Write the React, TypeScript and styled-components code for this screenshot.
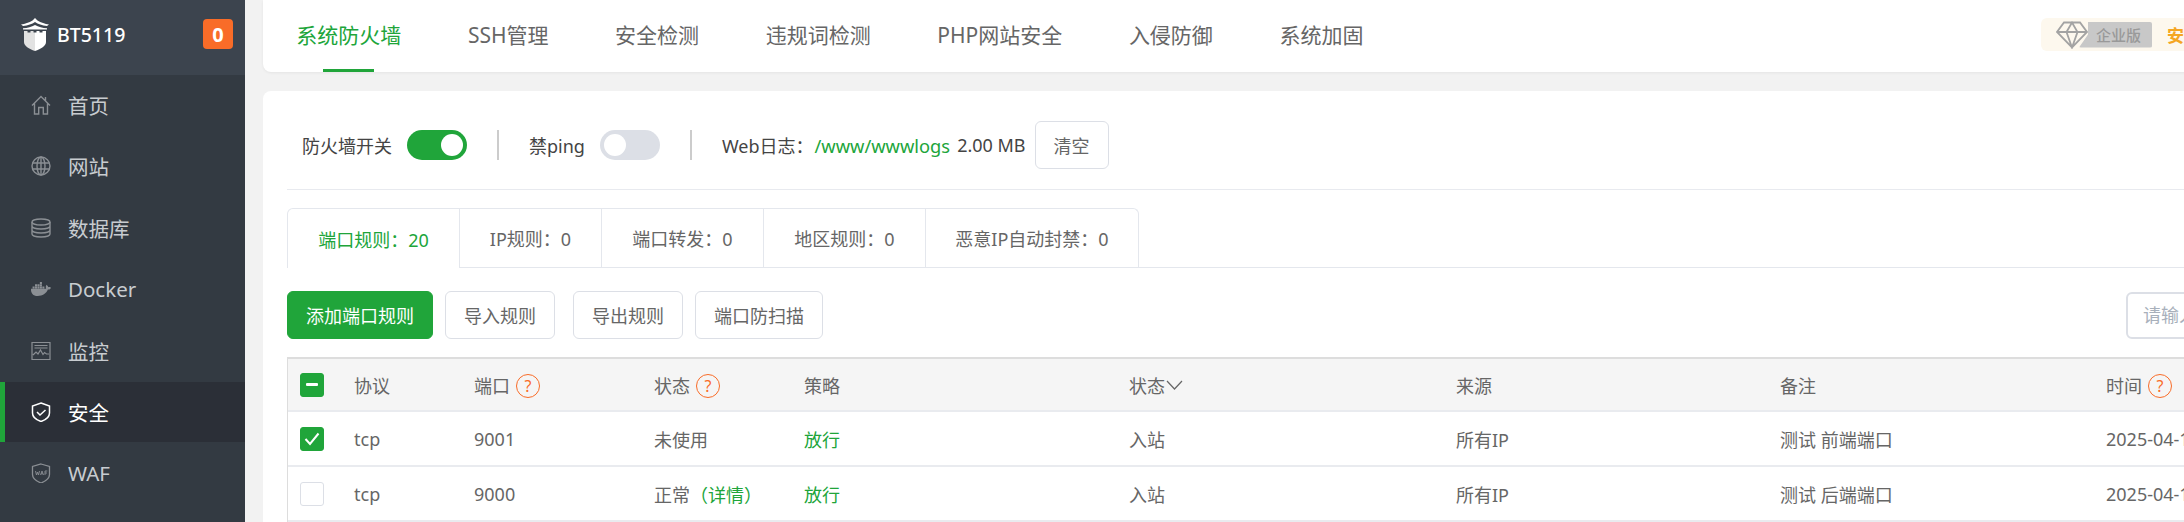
import React from 'react';
import styled, { createGlobalStyle } from 'styled-components';
import { FaDocker } from 'react-icons/fa';

const GREEN = '#20a53a';
const ORANGE = '#f96c28';

const GlobalStyle = createGlobalStyle`
  html, body { margin: 0; padding: 0; height: 100%; overflow: hidden; background: #f2f2f2; }
  body { font-family: "Noto Sans", "Noto Sans CJK SC", sans-serif; }
  * { box-sizing: border-box; }
`;

const Shell = styled.div`
  display: flex;
  width: 2184px;
  height: 522px;
  overflow: hidden;
`;

const Sidebar = styled.aside`
  flex: 0 0 245px;
  background: #333a42;
`;

const Brand = styled.div`
  display: flex;
  align-items: center;
  height: 75px;
  padding: 0 12px 7px 20px;
  background: #3c444e;
  color: #fff;
`;

const BrandName = styled.span`
  flex: 1;
  margin-left: 7px;
  font-size: 19.5px;
  font-weight: 500;
`;

const Badge = styled.span`
  display: flex;
  align-items: center;
  justify-content: center;
  width: 30px;
  height: 30px;
  border-radius: 4px;
  background: ${ORANGE};
  font-size: 20px;
  font-weight: 700;
`;

const MenuItem = styled.div<{ $active?: boolean }>`
  display: flex;
  align-items: center;
  gap: 17px;
  height: 60px;
  margin-bottom: 1.4px;
  padding-left: ${p => (p.$active ? 26 : 31)}px;
  border-left: ${p => (p.$active ? `5px solid ${GREEN}` : 'none')};
  background: ${p => (p.$active ? '#2b2f37' : 'transparent')};
  color: ${p => (p.$active ? '#fff' : '#c8ccd0')};
  font-size: 20.5px;

  svg {
    flex: 0 0 20px;
    width: 20px;
    height: 20px;
    color: ${p => (p.$active ? '#fff' : '#8b8f94')};
  }
`;

const Main = styled.main`
  flex: 1;
  min-width: 0;
  padding-left: 18px;
`;

const TopBar = styled.nav`
  display: flex;
  align-items: center;
  width: 1960px;
  height: 72px;
  background: #fff;
  border-radius: 0 0 8px 8px;
  box-shadow: 0 1px 3px rgba(0, 0, 0, 0.06);
`;

const TopTab = styled.div<{ $active?: boolean }>`
  position: relative;
  display: flex;
  align-items: center;
  height: 72px;
  padding: 0 33.3px 4px;
  color: ${p => (p.$active ? GREEN : '#666')};
  font-size: 21px;

  ${p =>
    p.$active &&
    `&::after {
      content: '';
      position: absolute;
      left: 60px;
      bottom: 0;
      width: 51px;
      height: 3px;
      background: ${GREEN};
    }`}
`;

const Enterprise = styled.div`
  display: flex;
  align-items: center;
  flex: 0 0 143px;
  height: 33px;
  margin: 0 39px 3px auto;
  padding-left: 15px;
  border-radius: 6px 0 0 6px;
  background: #fdf8ee;
  overflow: hidden;
`;

const EnterpriseTag = styled.div`
  position: relative;
  display: flex;
  align-items: center;
  flex: 0 0 96px;
  height: 26px;

  svg {
    position: absolute;
    left: 0;
    top: -1px;
    z-index: 1;
  }

  span {
    display: block;
    width: 73px;
    height: 26px;
    margin-left: 23px;
    padding-left: 17px;
    border-radius: 2px;
    background: #c8c8c8;
    color: #999;
    font-size: 15px;
    font-weight: 500;
    line-height: 26px;
    white-space: nowrap;
    clip-path: polygon(9px 0, 100% 0, 100% 100%, 0 100%, 9px 50%);
  }
`;

const EnterpriseLink = styled.span`
  margin-left: 15px;
  color: #f5a623;
  font-size: 17px;
  font-weight: 700;
  white-space: nowrap;
`;

const Card = styled.section`
  width: 1960px;
  height: 460px;
  margin-top: 19px;
  padding: 30px 24px 0;
  background: #fff;
  border-radius: 8px 8px 0 0;
`;

const SwitchRow = styled.div`
  display: flex;
  align-items: center;
  height: 48px;
  color: #444;
  font-size: 18px;
  white-space: nowrap;
`;

const Label = styled.span<{ $ml?: number }>`
  margin-left: ${p => p.$ml ?? 0}px;
`;

const Toggle = styled.span<{ $on?: boolean }>`
  position: relative;
  display: inline-block;
  width: 60px;
  height: 30px;
  margin-left: 15px;
  border-radius: 15px;
  background: ${p => (p.$on ? GREEN : '#dcdfe6')};

  &::after {
    content: '';
    position: absolute;
    top: 4px;
    left: ${p => (p.$on ? 34 : 4)}px;
    width: 22px;
    height: 22px;
    border-radius: 50%;
    background: #fff;
  }
`;

const Sep = styled.span`
  width: 2px;
  height: 30px;
  margin: 0 30px;
  background: #ccc;
`;

const GreenText = styled.span`
  color: ${GREEN};
`;

const LogPath = styled(GreenText)`
  margin-left: 1px;
  font-size: 18.3px;
`;

const Btn = styled.button<{ $primary?: boolean; $ml?: number; $w: number }>`
  width: ${p => p.$w}px;
  height: 48px;
  margin-left: ${p => p.$ml ?? 0}px;
  padding: 0;
  border: 1px solid ${p => (p.$primary ? GREEN : '#dcdfe6')};
  border-radius: 6px;
  background: ${p => (p.$primary ? GREEN : '#fff')};
  color: ${p => (p.$primary ? '#fff' : '#666')};
  font-family: inherit;
  font-size: 18px;
`;

const Divider = styled.div`
  height: 1px;
  margin-top: 20px;
  background: #e8eaef;
`;

const Tabs = styled.div`
  display: flex;
  height: 60px;
  margin-top: 18px;
  border-bottom: 1px solid #e4e7ed;
`;

const Tab = styled.div<{ $w: number; $active?: boolean }>`
  display: flex;
  align-items: center;
  justify-content: center;
  width: ${p => p.$w}px;
  height: ${p => (p.$active ? 60 : 59)}px;
  border: 1px solid #e4e7ed;
  border-left: ${p => (p.$active ? '1px solid #e4e7ed' : 'none')};
  border-bottom: none;
  border-radius: ${p => (p.$active ? '6px 0 0 0' : '0')};
  background: #fff;
  color: ${p => (p.$active ? GREEN : '#666')};
  font-size: 18px;

  &:last-child {
    border-top-right-radius: 6px;
  }
`;

const Actions = styled.div`
  display: flex;
  align-items: center;
  margin-top: 23px;
`;

const SearchBox = styled.div`
  width: 120px;
  height: 47px;
  margin-left: auto;
  margin-right: -47px;
  padding-left: 15px;
  border: 2px solid #dcdfe6;
  border-radius: 6px;
  color: #a8b0bb;
  font-size: 18px;
  line-height: 43px;
  white-space: nowrap;
  overflow: hidden;
`;

const Table = styled.div`
  width: 1960px;
  margin-top: 18px;
  border-top: 2px solid #ddd;
  border-left: 1px solid #ddd;
`;

const Row = styled.div<{ $head?: boolean }>`
  display: grid;
  grid-template-columns: 66px 120px 180px 150px 325px 327px 324px 326px 300px;
  align-items: center;
  height: ${p => (p.$head ? 53 : 55)}px;
  border-bottom: 2px solid #e9ebef;
  background: ${p => (p.$head ? '#f5f5f5' : '#fff')};
  color: #666;
  font-size: 18px;
  white-space: nowrap;
`;

const SortHead = styled.div`
  display: flex;
  align-items: center;
  gap: 1px;
`;

const CheckCell = styled.div`
  padding-left: 12px;
`;

const Check = styled.span<{ $on?: boolean }>`
  display: flex;
  align-items: center;
  justify-content: center;
  width: 24px;
  height: 24px;
  border: 1px solid ${p => (p.$on ? GREEN : '#dcdfe6')};
  border-radius: 3px;
  background: ${p => (p.$on ? GREEN : '#fff')};
`;

const Dash = styled.span`
  width: 12px;
  height: 3px;
  border-radius: 1px;
  background: #fff;
`;

const Help = styled.span`
  display: inline-flex;
  align-items: center;
  justify-content: center;
  width: 24px;
  height: 24px;
  margin-left: 6px;
  border: 1px solid ${ORANGE};
  border-radius: 50%;
  color: ${ORANGE};
  font-size: 16px;
  line-height: 1;
  vertical-align: 1px;
`;

const HomeIcon = () => (
  <svg viewBox="0 0 20 20" fill="none" stroke="currentColor" strokeWidth="1.4">
    <path d="M1 10.500 10 1.500l9 9M3.500 8.500V19h4.200v-6.500h4.600V19h4.200V8.500M14.500 2v3.500" />
  </svg>
);

const GlobeIcon = () => (
  <svg viewBox="0 0 20 20" fill="none" stroke="currentColor" strokeWidth="1.4">
    <circle cx="10" cy="10" r="9" />
    <ellipse cx="10" cy="10" rx="4" ry="9" />
    <path d="M1.500 7h17M1.500 13h17M10 1v18" />
  </svg>
);

const DatabaseIcon = () => (
  <svg viewBox="0 0 20 20" fill="none" stroke="currentColor" strokeWidth="1.4">
    <ellipse cx="10" cy="4" rx="9" ry="3" />
    <path d="M1 4v12c0 1.700 4 3 9 3s9-1.300 9-3V4M1 8c0 1.700 4 3 9 3s9-1.300 9-3M1 12c0 1.700 4 3 9 3s9-1.300 9-3" />
  </svg>
);

const MonitorIcon = () => (
  <svg viewBox="0 0 20 20" fill="none" stroke="currentColor" strokeWidth="1.2">
    <path d="M1 1.500h18v17H1zM3.500 4.500h13M3.500 7h13M2 14l3-3 2 2 2.500-4 2.500 4.500 1.500-2 2 1.500h2.500" />
  </svg>
);

const ShieldCheckIcon = () => (
  <svg viewBox="0 0 20 20" fill="none" stroke="currentColor" strokeWidth="1.5">
    <path d="M10 1 18.500 4v7c0 4-3.500 6.800-8.500 8.500C5 17.800 1.500 15 1.500 11V4z" />
    <path d="M6 10l3 3 5.500-5" />
  </svg>
);

const WafIcon = () => (
  <svg viewBox="0 0 20 20" fill="none" stroke="currentColor" strokeWidth="1.3">
    <path d="M10 1 18.500 3.500v8c0 4-3.500 6.500-8.500 8.500-5-2-8.500-4.500-8.500-8.500v-8z" />
    <path d="M4.500 8l1 4 1-3 1 3 1-4M9.500 12l1.500-4 1.500 4M10 10.800h2M14 12V8h2.300M14 10h2" strokeWidth="0.9" />
  </svg>
);

const Logo = () => (
  <svg width="30" height="33" viewBox="0 0 30 33">
    <path d="M15 0 12.500 2.500C9 4.500 5 6 1 6.500L3 8C8 7.500 12 6 15 4c3 2 7 3.500 12 4l2-1.500c-4-.5-8-2-11.500-4z" fill="#fff" />
    <path d="M3 10.200c4.500 0 8.500-1.500 12-3.200 3.500 1.700 7.500 3.200 12 3.200v1.300H3z" fill="#fff" />
    <path d="M4 13h3.500v1.500h3V13h3v1.500h1.500V33C9 31 4 28 4 24z" fill="#e2e2e2" />
    <path d="M15 14.500h1.500V13h3v1.500h3V13H26v11c0 4-5 7-11 9z" fill="#fff" />
  </svg>
);

const Diamond = () => (
  <svg width="32" height="28" viewBox="0 0 32 28" fill="none" stroke="#a3a3a3" strokeWidth="1.800">
    <path d="M8 1.500h16L31 11 16 26.500 1 11zM1 11h30M10.500 11 16 26.500 21.500 11 16 1.500 10.500 11" />
  </svg>
);

const CheckMark = () => (
  <svg width="16" height="14" viewBox="0 0 16 14" fill="none" stroke="#fff" strokeWidth="2">
    <path d="M1.500 7 6 12 14.500 1.500" />
  </svg>
);

const Chevron = () => (
  <svg width="17" height="10" viewBox="0 0 17 10" fill="none" stroke="#666" strokeWidth="1.200">
    <path d="M1 1l7.500 8L16 1" />
  </svg>
);

const menu = [
  { name: '首页', icon: <HomeIcon /> },
  { name: '网站', icon: <GlobeIcon /> },
  { name: '数据库', icon: <DatabaseIcon /> },
  { name: 'Docker', icon: <FaDocker /> },
  { name: '监控', icon: <MonitorIcon /> },
  { name: '安全', icon: <ShieldCheckIcon />, active: true },
  { name: 'WAF', icon: <WafIcon /> },
];

const topTabs = ['系统防火墙', 'SSH管理', '安全检测', '违规词检测', 'PHP网站安全', '入侵防御', '系统加固'];

const ruleTabs = [
  { text: '端口规则：20', w: 173 },
  { text: 'IP规则：0', w: 142 },
  { text: '端口转发：0', w: 162 },
  { text: '地区规则：0', w: 162 },
  { text: '恶意IP自动封禁：0', w: 213 },
];

const rows = [
  { on: true, port: '9001', status: '未使用', remark: '测试 前端端口' },
  { on: false, port: '9000', status: '正常', remark: '测试 后端端口', detail: true },
];

export default function App() {
  return (
    <Shell>
      <GlobalStyle />
      <Sidebar>
        <Brand>
          <Logo />
          <BrandName>BT5119</BrandName>
          <Badge>0</Badge>
        </Brand>
        {menu.map(m => (
          <MenuItem key={m.name} $active={m.active}>
            {m.icon}
            {m.name}
          </MenuItem>
        ))}
      </Sidebar>
      <Main>
        <TopBar>
          {topTabs.map((t, i) => (
            <TopTab key={t} $active={i === 0}>
              {t}
            </TopTab>
          ))}
          <Enterprise>
            <EnterpriseTag>
              <Diamond />
              <span>企业版</span>
            </EnterpriseTag>
            <EnterpriseLink>安全</EnterpriseLink>
          </Enterprise>
        </TopBar>
        <Card>
          <SwitchRow>
            <Label $ml={15}>防火墙开关</Label>
            <Toggle $on />
            <Sep />
            <Label>禁ping</Label>
            <Toggle />
            <Sep />
            <Label>Web日志：</Label>
            <LogPath>/www/wwwlogs</LogPath>
            <Label $ml={7}>2.00 MB</Label>
            <Btn $ml={9} $w={74}>清空</Btn>
          </SwitchRow>
          <Divider />
          <Tabs>
            {ruleTabs.map((t, i) => (
              <Tab key={t.text} $w={t.w} $active={i === 0}>
                {t.text}
              </Tab>
            ))}
          </Tabs>
          <Actions>
            <Btn $primary $w={146}>添加端口规则</Btn>
            <Btn $ml={12} $w={110}>导入规则</Btn>
            <Btn $ml={18} $w={110}>导出规则</Btn>
            <Btn $ml={12} $w={128}>端口防扫描</Btn>
            <SearchBox>请输入端口</SearchBox>
          </Actions>
          <Table>
            <Row $head>
              <CheckCell>
                <Check $on><Dash /></Check>
              </CheckCell>
              <div>协议</div>
              <div>端口<Help>?</Help></div>
              <div>状态<Help>?</Help></div>
              <div>策略</div>
              <SortHead>状态<Chevron /></SortHead>
              <div>来源</div>
              <div>备注</div>
              <div>时间<Help>?</Help></div>
            </Row>
            {rows.map(r => (
              <Row key={r.port}>
                <CheckCell>
                  <Check $on={r.on}>{r.on && <CheckMark />}</Check>
                </CheckCell>
                <div>tcp</div>
                <div>{r.port}</div>
                <div>
                  {r.status}
                  {r.detail && <GreenText>（详情）</GreenText>}
                </div>
                <GreenText>放行</GreenText>
                <div>入站</div>
                <div>所有IP</div>
                <div>{r.remark}</div>
                <div>2025-04-10 10:21:36</div>
              </Row>
            ))}
          </Table>
        </Card>
      </Main>
    </Shell>
  );
}
